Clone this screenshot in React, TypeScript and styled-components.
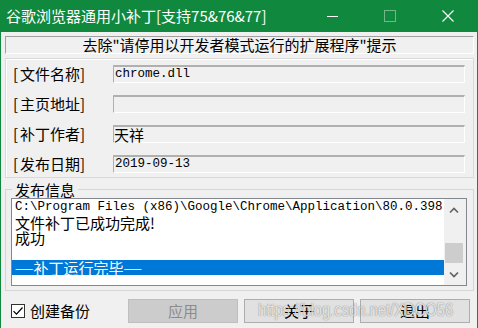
import React from "react";
import styled, { createGlobalStyle } from "styled-components";

const ACCENT = "#10893e";
const UI_FONT = `"Noto Sans CJK SC", "Noto Sans", sans-serif`;
const MONO_FONT = `"Liberation Mono", "Noto Sans CJK SC", monospace`;

const GlobalStyle = createGlobalStyle`
  html, body {
    margin: 0;
    padding: 0;
    background: #f0f0f0;
  }
  body {
    font-family: ${UI_FONT};
    color: #000;
  }
`;

const Window = styled.div`
  position: relative;
  width: 478px;
  height: 328px;
  box-sizing: border-box;
  border-left: 1px solid ${ACCENT};
  border-right: 1px solid ${ACCENT};
  background: #f0f0f0;
  display: flex;
  flex-direction: column;
  overflow: hidden;
`;

const TitleBar = styled.div`
  height: 32px;
  flex: none;
  display: flex;
  align-items: center;
  background: ${ACCENT};
  color: #fff;
`;

const Title = styled.div`
  flex: 1;
  padding-left: 5px;
  font-size: 15px;
  line-height: 32px;
  white-space: nowrap;
`;

const CaptionButton = styled.div<{ $dim?: boolean }>`
  width: 58px;
  height: 32px;
  display: flex;
  align-items: center;
  justify-content: center;
  opacity: ${(p) => (p.$dim ? 0.4 : 1)};
`;

const Body = styled.div`
  flex: 1;
  display: flex;
  flex-direction: column;
  padding: 4px 3px 0 4px;
`;

const Notice = styled.div`
  height: 18px;
  box-sizing: border-box;
  border-top: 1px solid #a0a0a0;
  border-left: 1px solid #a0a0a0;
  border-right: 1px solid #fff;
  border-bottom: 1px solid #fff;
  text-align: center;
  font-size: 15px;
  line-height: 16px;
  white-space: nowrap;
`;

const FieldsPanel = styled.div`
  margin-top: 4px;
  height: 120px;
  box-sizing: border-box;
  border: 1px solid #d9d9d9;
  box-shadow: inset 1px 1px 0 #fff;
  padding: 6px 8px 0 7px;
  display: grid;
  grid-template-columns: 100px 1fr;
  grid-auto-rows: 18px;
  row-gap: 12px;
`;

const Label = styled.div`
  font-size: 15px;
  line-height: 18px;
  white-space: nowrap;
`;

const Bracket = styled.span`
  display: inline-block;
  width: 7px;
`;

const Field = styled.div<{ $mono?: boolean }>`
  box-sizing: border-box;
  height: 18px;
  border-top: 2px solid #b0b0b0;
  border-left: 1px solid #b0b0b0;
  border-right: 1px solid #fff;
  border-bottom: 1px solid #fff;
  padding-left: ${(p) => (p.$mono ? 1 : 0)}px;
  font-family: ${(p) => (p.$mono ? MONO_FONT : UI_FONT)};
  font-size: ${(p) => (p.$mono ? 12.5 : 15)}px;
  line-height: 15px;
  white-space: nowrap;
`;

const Group = styled.fieldset`
  margin: 4px 0 0;
  min-width: 0;
  border: 1px solid #d5d5d5;
  padding: 1px 6px 4px 5px;
`;

const Legend = styled.legend`
  font-size: 15px;
  line-height: 15px;
  padding: 0 3px;
  margin-left: 1px;
`;

const ListBox = styled.div`
  height: 88px;
  box-sizing: border-box;
  border: 1px solid #828790;
  background: #fff;
  display: flex;
`;

const Lines = styled.div`
  flex: 1;
  min-width: 0;
  padding-top: 1px;
  overflow: hidden;
`;

const Line = styled.div<{ $mono?: boolean; $selected?: boolean }>`
  height: 15px;
  padding-left: 3px;
  font-family: ${(p) => (p.$mono ? MONO_FONT : UI_FONT)};
  font-size: ${(p) => (p.$mono ? 12.5 : 15)}px;
  line-height: 15px;
  white-space: nowrap;
  background: ${(p) => (p.$selected ? "#0078d7" : "transparent")};
  color: ${(p) => (p.$selected ? "#fff" : "#000")};
`;

const Dash = styled.span`
  position: relative;
  top: -1px;
  font-family: ${UI_FONT};
  font-size: 11px;
`;

const ScrollBar = styled.div`
  width: 22px;
  flex: none;
  background: #f0f0f0;
  display: flex;
  flex-direction: column;
  padding: 0 3px 0 1px;
  box-sizing: border-box;
`;

const ScrollArrow = styled.div`
  height: 22px;
  flex: none;
  display: flex;
  align-items: center;
  justify-content: center;
`;

const ScrollTrack = styled.div`
  flex: 1;
  display: flex;
  flex-direction: column;
  justify-content: flex-end;
`;

const ScrollThumb = styled.div`
  height: 20px;
  background: #cdcdcd;
`;

const BottomRow = styled.div`
  margin-top: 8px;
  height: 24px;
  display: flex;
  align-items: center;
  padding: 0 4px 0 6px;
`;

const CheckLabel = styled.label`
  display: flex;
  align-items: center;
  gap: 5px;
  font-size: 15px;
  line-height: 18px;
`;

const CheckBox = styled.span`
  width: 14px;
  height: 14px;
  box-sizing: border-box;
  border: 1px solid #333;
  background: #fff;
  display: flex;
  align-items: center;
  justify-content: center;
`;

const Buttons = styled.div`
  margin-left: auto;
  display: flex;
  gap: 6px;
`;

const Button = styled.button<{ $disabled?: boolean }>`
  width: 110px;
  height: 24px;
  box-sizing: border-box;
  padding: 0;
  font-family: ${UI_FONT};
  font-size: 15px;
  line-height: 20px;
  background: ${(p) => (p.$disabled ? "#cccccc" : "#e1e1e1")};
  border: 1px solid ${(p) => (p.$disabled ? "#bfbfbf" : "#adadad")};
  color: ${(p) => (p.$disabled ? "#8c8c8c" : "#000")};
`;

const Watermark = styled.div`
  position: absolute;
  left: 257px;
  top: 300px;
  font-family: "Liberation Sans", sans-serif;
  font-size: 18px;
  line-height: 20px;
  color: rgba(255, 255, 255, 0.8);
  text-shadow: 0 0 1px rgba(0, 0, 0, 0.45), 0 0 2px rgba(0, 0, 0, 0.15);
  transform: scaleX(0.82);
  transform-origin: left center;
  white-space: nowrap;
  pointer-events: none;
`;

const fields: { label: string; value: string; mono?: boolean }[] = [
  { label: "文件名称", value: "chrome.dll", mono: true },
  { label: "主页地址", value: "" },
  { label: "补丁作者", value: "天祥" },
  { label: "发布日期", value: "2019-09-13", mono: true },
];

const Chevron = ({ up }: { up?: boolean }) => (
  <svg width="10" height="7" viewBox="0 0 10 7">
    <path
      d={up ? "M1 5.5L5 1.5L9 5.5" : "M1 1.5L5 5.5L9 1.5"}
      fill="none"
      stroke="#606060"
      strokeWidth="1.6"
    />
  </svg>
);

export default function App() {
  return (
    <>
      <GlobalStyle />
      <Window>
        <TitleBar>
          <Title>谷歌浏览器通用小补丁[支持75&amp;76&amp;77]</Title>
          <CaptionButton>
            <svg width="11" height="11" viewBox="0 0 11 11">
              <path d="M0 5.5H11" stroke="#fff" strokeWidth="1" />
            </svg>
          </CaptionButton>
          <CaptionButton $dim>
            <svg width="12" height="12" viewBox="0 0 12 12">
              <rect x="0.5" y="0.5" width="11" height="11" fill="none" stroke="#fff" />
            </svg>
          </CaptionButton>
          <CaptionButton>
            <svg width="12" height="12" viewBox="0 0 12 12">
              <path d="M0.5 0.5L11.5 11.5M11.5 0.5L0.5 11.5" stroke="#fff" strokeWidth="1.1" />
            </svg>
          </CaptionButton>
        </TitleBar>

        <Body>
          <Notice>去除"请停用以开发者模式运行的扩展程序"提示</Notice>

          <FieldsPanel>
            {fields.map((f) => (
              <React.Fragment key={f.label}>
                <Label>
                  <Bracket>[</Bracket>
                  {f.label}
                  <Bracket>]</Bracket>
                </Label>
                <Field $mono={f.mono}>{f.value}</Field>
              </React.Fragment>
            ))}
          </FieldsPanel>

          <Group>
            <Legend>发布信息</Legend>
            <ListBox>
              <Lines>
                <Line $mono>C:\Program Files (x86)\Google\Chrome\Application\80.0.398</Line>
                <Line>文件补丁已成功完成!</Line>
                <Line>成功</Line>
                <Line />
                <Line $selected>
                  <Dash>——</Dash>补丁运行完毕<Dash>——</Dash>
                </Line>
              </Lines>
              <ScrollBar>
                <ScrollArrow>
                  <Chevron up />
                </ScrollArrow>
                <ScrollTrack>
                  <ScrollThumb />
                </ScrollTrack>
                <ScrollArrow>
                  <Chevron />
                </ScrollArrow>
              </ScrollBar>
            </ListBox>
          </Group>

          <BottomRow>
            <CheckLabel>
              <CheckBox>
                <svg width="12" height="12" viewBox="0 0 12 12">
                  <path d="M1.5 6.2L4.5 9.2L10.5 2.5" fill="none" stroke="#000" strokeWidth="1.2" />
                </svg>
              </CheckBox>
              创建备份
            </CheckLabel>
            <Buttons>
              <Button $disabled>应用</Button>
              <Button>关于</Button>
              <Button>退出</Button>
            </Buttons>
          </BottomRow>
        </Body>

        <Watermark>https://blog.csdn.net/XDCO56</Watermark>
      </Window>
    </>
  );
}
